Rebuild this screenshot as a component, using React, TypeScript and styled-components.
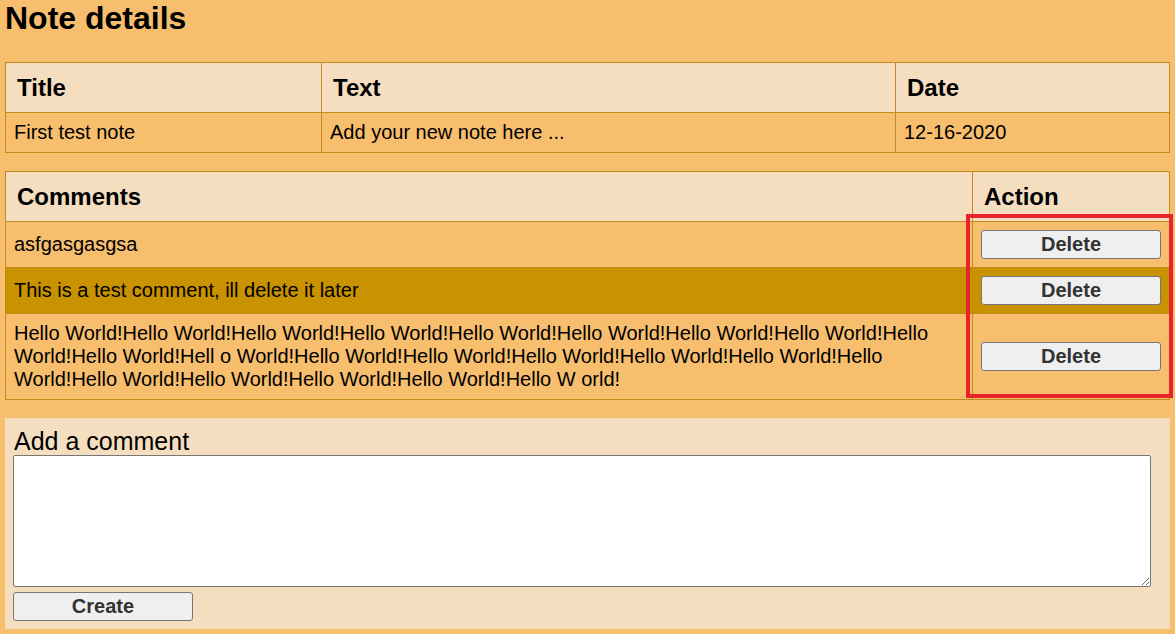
import React from 'react';
import styled, { createGlobalStyle } from 'styled-components';

const GlobalStyle = createGlobalStyle`
  html, body {
    margin: 0;
    padding: 0;
    background: #f7be6e;
  }
  body {
    font-family: "Liberation Sans", Arial, sans-serif;
    color: #000;
  }
`;

const Page = styled.div`
  padding: 0 5px;
  display: flex;
  flex-direction: column;
`;

const Heading = styled.h1`
  margin: 0 0 25px;
  font-size: 32px;
  font-weight: bold;
  line-height: 37px;
`;

const TableWrap = styled.div<{ $gap: number }>`
  position: relative;
  margin-bottom: ${props => props.$gap}px;
`;

const Table = styled.table`
  width: 100%;
  table-layout: fixed;
  border-collapse: collapse;
  border: 1px solid #c28b1c;
`;

const HeadCell = styled.th<{ $width?: string }>`
  box-sizing: border-box;
  width: ${props => props.$width || 'auto'};
  height: 50px;
  padding: 0 11px;
  background: #f5debf;
  border: 1px solid #c28b1c;
  text-align: left;
  font-size: 24px;
  font-weight: bold;
`;

const Row = styled.tr<{ $highlight?: boolean }>`
  background: ${props => (props.$highlight ? '#c89200' : 'transparent')};
`;

const Cell = styled.td<{ $tall?: boolean }>`
  box-sizing: border-box;
  padding: ${props => (props.$tall ? '8px' : '0 8px')};
  height: ${props => (props.$tall ? 'auto' : '40px')};
  border: 1px solid #c28b1c;
  font-size: 20px;
  line-height: 23px;
  vertical-align: middle;
`;

const CommentCell = styled(Cell)`
  height: ${props => (props.$tall ? 'auto' : '46px')};
`;

const GreyButton = styled.button<{ $width?: string }>`
  display: block;
  width: ${props => props.$width || '100%'};
  height: 29px;
  padding: 0 6px;
  background: #efefef;
  border: 1px solid #767676;
  border-radius: 3px;
  color: #333;
  font-family: "Liberation Sans", Arial, sans-serif;
  font-size: 20px;
  font-weight: bold;
  cursor: pointer;
`;

const Highlight = styled.div`
  position: absolute;
  left: 961px;
  top: 43px;
  width: 199px;
  height: 176px;
  border: 4px solid #e8242a;
  pointer-events: none;
`;

const CommentBox = styled.div`
  background: #f5debf;
  padding: 9px 8px 8px;
  display: flex;
  flex-direction: column;
`;

const BoxLabel = styled.label`
  font-size: 25px;
  line-height: 28px;
  padding-left: 1px;
`;

const TextArea = styled.textarea`
  width: 99%;
  height: 132px;
  box-sizing: border-box;
  margin: 0 0 5px;
  border: 1px solid #767676;
  border-radius: 2px;
  background: #fff;
  font-family: "Liberation Mono", monospace;
  font-size: 13px;
`;

const comments = [
  'asfgasgasgsa',
  'This is a test comment, ill delete it later',
  'Hello World!Hello World!Hello World!Hello World!Hello World!Hello World!Hello World!Hello World!Hello World!Hello World!Hell o World!Hello World!Hello World!Hello World!Hello World!Hello World!Hello World!Hello World!Hello World!Hello World!Hello World!Hello W orld!',
];

export default function App() {
  return (
    <>
      <GlobalStyle />
      <Page>
        <Heading>Note details</Heading>

        <TableWrap $gap={18}>
          <Table>
            <thead>
              <tr>
                <HeadCell $width="316px">Title</HeadCell>
                <HeadCell $width="574px">Text</HeadCell>
                <HeadCell>Date</HeadCell>
              </tr>
            </thead>
            <tbody>
              <Row>
                <Cell>First test note</Cell>
                <Cell>Add your new note here ...</Cell>
                <Cell>12-16-2020</Cell>
              </Row>
            </tbody>
          </Table>
        </TableWrap>

        <TableWrap $gap={18}>
          <Table>
            <thead>
              <tr>
                <HeadCell>Comments</HeadCell>
                <HeadCell $width="197px">Action</HeadCell>
              </tr>
            </thead>
            <tbody>
              {comments.map((text, i) => (
                <Row key={i} $highlight={i === 1}>
                  <CommentCell $tall={i === 2}>{text}</CommentCell>
                  <CommentCell>
                    <GreyButton>Delete</GreyButton>
                  </CommentCell>
                </Row>
              ))}
            </tbody>
          </Table>
          <Highlight />
        </TableWrap>

        <CommentBox>
          <BoxLabel>Add a comment</BoxLabel>
          <TextArea />
          <GreyButton $width="180px">Create</GreyButton>
        </CommentBox>
      </Page>
    </>
  );
}
